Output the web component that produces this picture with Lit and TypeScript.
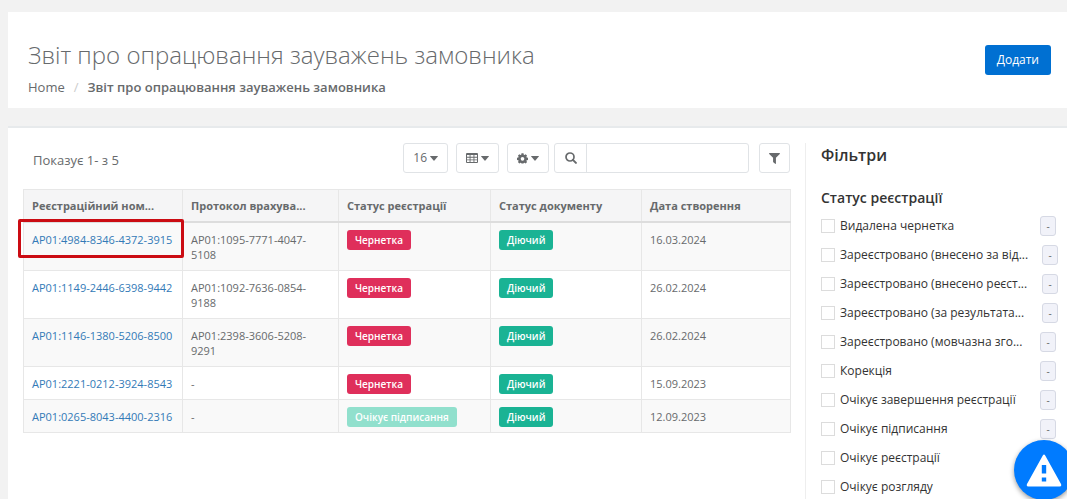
import { LitElement, html, css } from "lit";
import { customElement } from "lit/decorators.js";
import { classMap } from "lit/directives/class-map.js";

interface ReportRow {
  id: string;
  protocol: string;
  status: string;
  pending?: boolean;
  date: string;
}

interface FilterOption {
  label: string;
  long?: boolean;
}

const ROWS: ReportRow[] = [
  { id: "AP01:4984-8346-4372-3915", protocol: "AP01:1095-7771-4047-5108", status: "Чернетка", date: "16.03.2024" },
  { id: "AP01:1149-2446-6398-9442", protocol: "AP01:1092-7636-0854-9188", status: "Чернетка", date: "26.02.2024" },
  { id: "AP01:1146-1380-5206-8500", protocol: "AP01:2398-3606-5208-9291", status: "Чернетка", date: "26.02.2024" },
  { id: "AP01:2221-0212-3924-8543", protocol: "-", status: "Чернетка", date: "15.09.2023" },
  { id: "AP01:0265-8043-4400-2316", protocol: "-", status: "Очікує підписання", pending: true, date: "12.09.2023" },
];

const FILTERS: FilterOption[] = [
  { label: "Видалена чернетка" },
  { label: "Зареєстровано (внесено за від...", long: true },
  { label: "Зареєстровано (внесено реєст...", long: true },
  { label: "Зареєстровано (за результата...", long: true },
  { label: "Зареєстровано (мовчазна зго..." },
  { label: "Корекція" },
  { label: "Очікує завершення реєстрації" },
  { label: "Очікує підписання" },
  { label: "Очікує реєстрації" },
  { label: "Очікує розгляду" },
];

const TITLE = "Звіт про опрацювання зауважень замовника";

const caret = html`<svg viewBox="0 0 8 5" width="8" height="5" aria-hidden="true"><path d="M0.3 0h7.4q.4 0 .1.5L4.4 4.6q-.4.4-.8 0L.2.5Q-.1 0 .3 0z" /></svg>`;

const tableIcon = html`<svg viewBox="0 0 12 10" width="12" height="10" aria-hidden="true">
  <path fill-rule="evenodd" d="M1 0h10a1 1 0 0 1 1 1v8a1 1 0 0 1-1 1H1a1 1 0 0 1-1-1V1a1 1 0 0 1 1-1zM1 2v1.8h2.6V2zM4.5 2v1.8h3V2zM8.4 2v1.8H11V2zM1 4.7v1.7h2.6V4.7zM4.5 4.7v1.7h3V4.7zM8.4 4.7v1.7H11V4.7zM1 7.3V9h2.6V7.3zM4.5 7.3V9h3V7.3zM8.4 7.3V9H11V7.3z" />
</svg>`;

const gearIcon = html`<svg viewBox="0 0 12 12" width="11" height="11" aria-hidden="true">
  <path fill-rule="evenodd" d="M4.9 1h2.2l.3 1.4.8.4 1.3-.8 1.5 1.5-.8 1.3.4.8 1.4.3v2.2l-1.4.3-.4.8.8 1.3L9.5 12l-1.3-.8-.8.4-.3.4H4.9l-.3-.4-.8-.4L2.5 12 1 10.5l.8-1.300-.4-.8L0 8.100V5.900l1.400-.3.4-.8L1 3.500 2.500 2l1.300.8.8-.4zM6 5a2 2 0 1 0 0 4 2 2 0 0 0 0-4z" transform="translate(0 -.6)" />
</svg>`;

const searchIcon = html`<svg viewBox="0 0 12 12" width="12" height="12" aria-hidden="true">
  <circle cx="5" cy="5" r="4" fill="none" stroke="currentColor" stroke-width="1.7" />
  <path d="M7.9 7.9l3 3" stroke="currentColor" stroke-width="2" stroke-linecap="round" />
</svg>`;

const filterIcon = html`<svg viewBox="0 0 10 10" width="11" height="11" aria-hidden="true">
  <path d="M.5 0h9q.7.1.3.8L6.300 4.400v5.100q-.1.600-.7.300L3.900 8.300q-.2-.2-.2-.4V4.400L.2.800Q-.2.100.500 0z" />
</svg>`;

@customElement("app-root")
export class AppRoot extends LitElement {
  static styles = css`
    :host {
      display: block;
      min-height: 100vh;
      overflow: hidden;
      background: #f2f2f2;
      color: #676a6c;
      font: 13px/20px "Open Sans", "Noto Sans", sans-serif;
    }
    * { box-sizing: border-box; }
    button, input { font: inherit; color: inherit; margin: 0; }
    h1, h2, h3, p, ol, ul { margin: 0; padding: 0; font-weight: inherit; list-style: none; }
    svg { display: block; fill: currentColor; flex: none; }

    .page { display: flex; flex-direction: column; gap: 18px; min-height: 100vh; padding: 12px 0 0 8px; }

    .heading {
      display: flex;
      justify-content: space-between;
      align-items: center;
      height: 96px;
      padding: 0 16px 0 20px;
      background: #fff;
    }
    .titles { padding-top: 16px; }
    .title { font-size: 24px; line-height: 32px; font-weight: 300; }
    .crumbs { display: flex; gap: 9px; padding-top: 6px; line-height: 20px; }
    .crumbs a { color: inherit; text-decoration: none; }
    .sep { color: #ccc; }
    .current { font-weight: 600; }
    .add {
      height: 30px;
      padding: 0 12px;
      border: 0;
      border-radius: 3px;
      background: #0070d2;
      color: #fff;
      font-size: 12px;
    }

    .panel {
      flex: 1;
      display: flex;
      align-items: stretch;
      gap: 15px;
      padding: 15px 0 0 15px;
      border-top: 2px solid #e7eaec;
      background: #fff;
    }
    .content { flex: 1; min-width: 0; }
    .toolbar { display: flex; align-items: center; height: 30px; margin-bottom: 16px; }
    .summary { flex: 1; padding: 4px 0 0 10px; }
    .tool {
      display: flex;
      align-items: center;
      justify-content: center;
      gap: 3px;
      height: 30px;
      padding: 0 9px;
      border: 1px solid #e0e3e6;
      border-radius: 3px;
      background: #fff;
      font-size: 12px;
    }
    .tools { display: flex; gap: 8px; }
    .search {
      display: flex;
      width: 195px;
      height: 30px;
      margin: 0 10px 0 5px;
      border: 1px solid #e0e3e6;
      border-radius: 3px;
    }
    .go { display: grid; place-items: center; width: 32px; padding: 0; border: 0; border-right: 1px solid #e0e3e6; background: none; }
    .query { flex: 1; min-width: 0; border: 0; padding: 0 8px; background: none; outline: 0; font-size: 12px; }

    .grid { width: 100%; table-layout: fixed; border-collapse: collapse; font-size: 11px; line-height: 15px; }
    .grid th, .grid td { border: 1px solid #e7e7e7; text-align: left; vertical-align: top; }
    .grid th { padding: 8px; background: #f5f5f6; border-bottom: 2px solid #ddd; font-weight: 700; white-space: nowrap; }
    .grid td { padding: 9px 8px 8px; }
    .grid tbody tr:nth-child(odd) { background: #f9f9f9; }
    .grid .state { padding-top: 7px; padding-bottom: 5px; }
    .col-id { width: 159px; }
    .col-protocol { width: 156px; }
    .col-status { width: 152px; }
    .col-doc { width: 151px; }
    .col-date { width: 149px; }
    .link { position: relative; color: #337ab7; text-decoration: none; white-space: nowrap; }
    .marked::after {
      content: "";
      position: absolute;
      inset: -13px -12px -11px -14px;
      border: 3px solid #cb0c13;
      border-radius: 2px;
    }
    .badge {
      display: inline-block;
      vertical-align: top;
      height: 20px;
      padding: 0 8px;
      border-radius: 3px;
      color: #fff;
      font-size: 10px;
      line-height: 20px;
      font-weight: 600;
    }
    .draft { background: #df2f5b; }
    .pending { background: #91e0cd; }
    .active { background: #1ab394; }

    .filters { width: 262px; padding: 0 9px 0 15px; border-left: 1px solid #eee; color: #333; }
    .filters h2 { font-size: 16px; line-height: 24px; font-weight: 600; }
    .filters h3 { padding: 20px 0 7px; font-size: 14px; line-height: 22px; font-weight: 600; }
    .options { display: grid; gap: 9px; font-size: 12px; }
    .option { display: flex; justify-content: space-between; height: 20px; padding-right: 2px; }
    .long { padding-right: 0; }
    .option label { display: flex; gap: 5px; align-items: center; white-space: nowrap; }
    .box { appearance: none; width: 14px; height: 14px; border: 1px solid #dcdcdc; background: #fff; }
    .count {
      width: 16px;
      height: 20px;
      border: 1px solid #d6d9e4;
      border-radius: 3px;
      background: #f1f2f9;
      color: #666;
      font-size: 10px;
      line-height: 18px;
      text-align: center;
    }
    .alert {
      position: fixed;
      right: -7px;
      bottom: -1px;
      display: grid;
      place-items: center;
      width: 60px;
      height: 60px;
      padding: 0;
      border: 0;
      border-radius: 50%;
      background: #007bff;
      color: #fff;
      box-shadow: 0 2px 5px rgba(0, 0, 0, 0.4);
    }
  `;

  render() {
    return html`
      <div class="page">
        <header class="heading">
          <div class="titles">
            <h1 class="title">${TITLE}</h1>
            <ol class="crumbs">
              <li><a href="#home">Home</a></li>
              <li class="sep" aria-hidden="true">/</li>
              <li class="current">${TITLE}</li>
            </ol>
          </div>
          <button class="add" type="button">Додати</button>
        </header>
        <main class="panel">
          <section class="content">
            <div class="toolbar">
              <p class="summary">Показує 1- з 5</p>
              <div class="tools">
                <button class="tool" type="button" aria-haspopup="true">16${caret}</button>
                <button class="tool" type="button" aria-haspopup="true" aria-label="Стовпці">${tableIcon}${caret}</button>
                <button class="tool" type="button" aria-haspopup="true" aria-label="Налаштування">${gearIcon}${caret}</button>
              </div>
              <form class="search" role="search">
                <button class="go" type="button" aria-label="Шукати">${searchIcon}</button>
                <input class="query" type="text" aria-label="Пошук" />
              </form>
              <button class="tool" type="button" aria-label="Фільтр">${filterIcon}</button>
            </div>
            <table class="grid">
              <thead>
                <tr>
                  <th class="col-id">Реєстраційний ном...</th>
                  <th class="col-protocol">Протокол врахува...</th>
                  <th class="col-status">Статус реєстрації</th>
                  <th class="col-doc">Статус документу</th>
                  <th class="col-date">Дата створення</th>
                </tr>
              </thead>
              <tbody>
                ${ROWS.map((row, i) => html`
                  <tr>
                    <td><a href="#report" class=${classMap({ link: true, marked: i === 0 })}>${row.id}</a></td>
                    <td>${row.protocol}</td>
                    <td class="state"><span class=${classMap({ badge: true, draft: !row.pending, pending: !!row.pending })}>${row.status}</span></td>
                    <td class="state"><span class="badge active">Діючий</span></td>
                    <td>${row.date}</td>
                  </tr>
                `)}
              </tbody>
            </table>
          </section>
          <aside class="filters">
            <h2>Фільтри</h2>
            <h3>Статус реєстрації</h3>
            <ul class="options">
              ${FILTERS.map((option) => html`
                <li class=${classMap({ option: true, long: !!option.long })}>
                  <label><input class="box" type="checkbox" />${option.label}</label>
                  <span class="count">-</span>
                </li>
              `)}
            </ul>
          </aside>
        </main>
      </div>
      <button class="alert" type="button" aria-label="Попередження">
        <svg viewBox="0 0 36 33" width="36" height="33" aria-hidden="true">
          <path fill-rule="evenodd" d="M16.8 1.500q1.200-2 2.400 0L35 30q1 2.500-1.500 2.500h-31Q0 32.500 1 30zM15.800 11v8.500h4.400V11zM15.800 23.500v4h4.400v-4z" />
        </svg>
      </button>
    `;
  }
}
